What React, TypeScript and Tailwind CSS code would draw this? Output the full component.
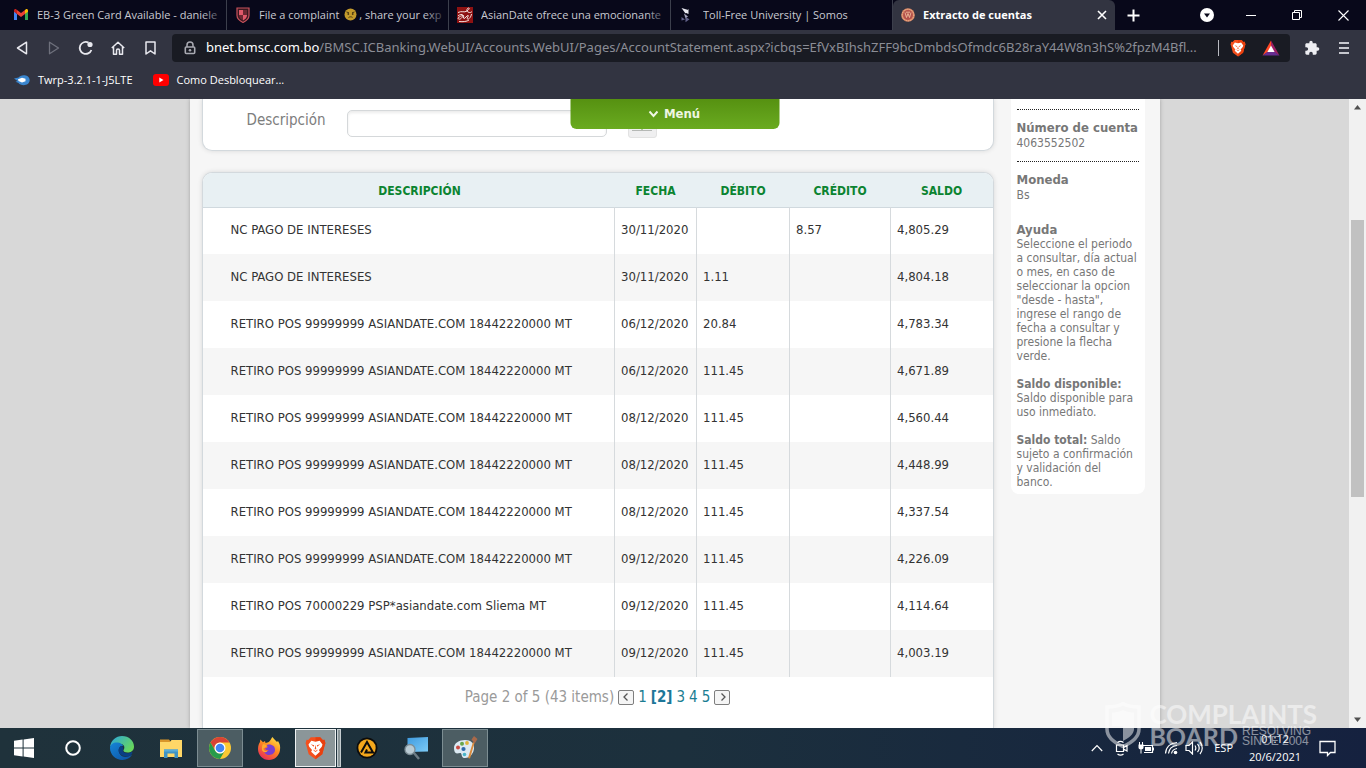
import type { ReactNode } from "react";

/* ---------- data ---------- */

type Movement = { text: string; date: string; debit: string; credit: string; balance: string };

const POS = "RETIRO POS 99999999 ASIANDATE.COM 18442220000 MT";

const movements: Movement[] = [
  { text: "NC PAGO DE INTERESES", date: "30/11/2020", debit: "", credit: "8.57", balance: "4,805.29" },
  { text: "NC PAGO DE INTERESES", date: "30/11/2020", debit: "1.11", credit: "", balance: "4,804.18" },
  { text: POS, date: "06/12/2020", debit: "20.84", credit: "", balance: "4,783.34" },
  { text: POS, date: "06/12/2020", debit: "111.45", credit: "", balance: "4,671.89" },
  { text: POS, date: "08/12/2020", debit: "111.45", credit: "", balance: "4,560.44" },
  { text: POS, date: "08/12/2020", debit: "111.45", credit: "", balance: "4,448.99" },
  { text: POS, date: "08/12/2020", debit: "111.45", credit: "", balance: "4,337.54" },
  { text: POS, date: "09/12/2020", debit: "111.45", credit: "", balance: "4,226.09" },
  { text: "RETIRO POS 70000229 PSP*asiandate.com Sliema MT", date: "09/12/2020", debit: "111.45", credit: "", balance: "4,114.64" },
  { text: POS, date: "09/12/2020", debit: "111.45", credit: "", balance: "4,003.19" },
];

/* ---------- icons ---------- */

const GmailIcon = () => (
  <svg width="16" height="16" viewBox="0 0 16 16" className="shrink-0">
    <path d="M1 3.600v9.400h3V7z" fill="#4285f4" />
    <path d="M15 3.600v9.400h-3V7z" fill="#34a853" />
    <path d="M12 7l3-2.200V3.600c0-1.400-1.500-1.900-2.400-1.200L12 3z" fill="#fbbc04" />
    <path d="M4 7L1 4.800V3.600C1 2.200 2.500 1.700 3.400 2.400L4 3z" fill="#c5221f" />
    <path d="M4 3l4 3.100L12 3v4l-4 3.100L4 7z" fill="#ea4335" />
  </svg>
);

const ShieldTabIcon = () => (
  <svg width="16" height="16" viewBox="0 0 16 16" className="shrink-0">
    <path d="M2 1h12v7.500c0 3.500-3 5.500-6 7-3-1.500-6-3.500-6-7z" fill="#3a1820" stroke="#c8525c" strokeWidth="1.200" />
    <path d="M4 3h4v5H4zM8 8h4v.5c0 2.300-2 3.800-4 5z" fill="#e0596a" />
    <path d="M8 3h4v5H8zM4 8h4v5.500c-2-1.200-4-2.700-4-5z" fill="#6b2832" />
  </svg>
);

const WryFace = () => (
  <svg width="13" height="13" viewBox="0 0 13 13" className="mx-[2px] inline-block align-[-2px]">
    <circle cx="6.500" cy="6.500" r="6" fill="#c39a2c" />
    <path d="M2.500 4l2.500.8M10.500 4L8 4.800M4.500 9.600c1-1 3-1 4-.2" stroke="#4c3a10" strokeWidth="1" fill="none" />
    <circle cx="4.300" cy="6" r=".9" fill="#4c3a10" />
    <circle cx="8.700" cy="6" r=".9" fill="#4c3a10" />
  </svg>
);

const AsianDateIcon = () => (
  <svg width="16" height="16" viewBox="0 0 16 16" className="shrink-0">
    <rect width="16" height="16" fill="#8e1212" />
    <path d="M1 5.500c4-2 6 .5 9-1.500 2-1.500 3-3 1.500-3S9 4 11 5s3 .5 4-.5M1 9c2-2 5-2 5-.5S3 13 1.500 12s2-3.500 5-3.500c1 0-1 3 .5 3s2.500-3 4-3-2 3-.5 3.500S14 10 14.500 7M2 14.500c4 .5 8 0 10-1.500" stroke="#f5e3e0" strokeWidth="1" fill="none" />
  </svg>
);

const SomosIcon = () => (
  <svg width="16" height="16" viewBox="0 0 16 16" className="shrink-0">
    <path d="M2.500 1l6 1.800-2 3.700zM9.500 2v5L6 5.500z" fill="#e8e8f0" />
    <path d="M5 6.500l4 3-2.500 2z" fill="#a4a4bd" />
    <path d="M6.500 10l4 2.200-4 3zM2.500 10l3.500 2.500-3.500 1z" fill="#62628a" />
  </svg>
);

const BankSeal = () => (
  <svg width="14" height="14" viewBox="0 0 14 14" className="shrink-0">
    <circle cx="7" cy="7" r="6.800" fill="#d98564" />
    <circle cx="7" cy="7" r="4.900" fill="#b5524c" />
    <circle cx="7" cy="7" r="5.800" fill="none" stroke="#f0c29c" strokeWidth=".8" strokeDasharray="1 1" />
    <path d="M4 4.500l1.500 5L7 5.500l1.500 4 1.500-5M5 4.200h4" stroke="#eebb9a" strokeWidth=".9" fill="none" />
  </svg>
);

const BraveIcon = ({ className }: { className: string }) => (
  <svg viewBox="0 0 20 23" className={className}>
    <path d="M5.500 1.200h9L17 3.800l1.600-.2L19.500 7l-.6 1.600-2.400 9L10 22.400l-6.500-4.800-2.400-9L.5 7l.9-3.400L3 3.800z" fill="#f4501e" />
    <path d="M10 1.200h4.500L17 3.800l1.600-.2L19.500 7l-.6 1.600-2.400 9L10 22.400z" fill="#e8400f" />
    <path d="M6 4.600l4 .8 4-.8 2.700 3.600-.7 2-2.700 3.300.9 1.600L10 18.900l-4.200-3.800.9-1.600L4 10.200l-.7-2z" fill="#fff" />
    <path d="M5.500 8l3.200.9-.3 1.400zM14.500 8l-3.200.9.300 1.400zM10 8.500l.8 4.300H9.200zM7.800 13l2.200 1.300 2.200-1.300-.6 1.200L10 15.400l-1.600-1.200z" fill="#f4501e" />
  </svg>
);

const ReloadIcon = () => (
  <svg width="16" height="16" viewBox="0 0 16 16">
    <path d="M13.400 10A6 6 0 1 1 10.500 2.600" stroke="currentColor" strokeWidth="1.800" fill="none" />
    <circle cx="12" cy="4.500" r="2.600" fill="currentColor" />
  </svg>
);

const EdgeIcon = () => (
  <svg width="26" height="26" viewBox="0 0 26 26">
    <defs>
      <linearGradient id="edgeTop" x1="0" y1="0" x2="1" y2="0.600">
        <stop offset="0" stopColor="#2aa6e0" />
        <stop offset="1" stopColor="#68d75c" />
      </linearGradient>
      <linearGradient id="edgeBase" x1="0" y1="0" x2="1" y2="1">
        <stop offset="0" stopColor="#1686d8" />
        <stop offset="1" stopColor="#0c4fa0" />
      </linearGradient>
    </defs>
    <path d="M1 12C2 5 7 1 13 1c7 0 12 5 12 10.500 0 4-3 6-6.500 6-3 0-4.500-1.200-4-2.500 2-2.500.5-6-3-6C6 9 2 10 1 12z" fill="url(#edgeTop)" />
    <path d="M1 13c0-4 4-6 8-5.500 3 .3 5 2.200 5.300 4-2-1.500-5 .8-4.600 4.500.5 4 4.300 7 9.300 5.600 1.800-.6 3.500-1.500 4-2C21.500 23 17.500 25 13.500 25 6.500 25 1 19.500 1 13z" fill="url(#edgeBase)" />
    <path d="M9.700 15.500c0-2.500 1.300-4.300 3.300-4.600 1.300 1.300 1.500 3 .8 4.300-.3 1.600 1.700 3 4.700 3 1.500 0 3.300-.6 4.700-1.500.3.700.2 1.600-.5 2.500-2 1.900-3.500 2.500-6 2.300-4-.4-7-2.800-7-6z" fill="#0a3f84" />
  </svg>
);

const FolderIcon = () => (
  <svg width="24" height="22" viewBox="0 0 24 22">
    <path d="M1 2.500h9l2 2.500H1z" fill="#d9962a" />
    <path d="M1 5l10 0 1.500-2H23v17H1z" fill="#ffd767" />
    <path d="M5 12.500h14V21h-3.500v-4.500h-7V21H5z" fill="#3e93c4" />
    <path d="M5 12.500h14v2H5z" fill="#58acd8" />
  </svg>
);

const ChromeIcon = () => (
  <svg width="24" height="24" viewBox="0 0 24 24">
    <circle cx="12" cy="12" r="11" fill="#fcc934" />
    <path d="M2.500 6.500A11 11 0 0 1 21.500 6.500H12a5.500 5.500 0 0 0-4.800 8.200z" fill="#d94335" />
    <path d="M2.500 6.500A11 11 0 0 0 12 23l4.800-8.200a5.500 5.500 0 0 1-9.600 0z" fill="#279b4b" />
    <circle cx="12" cy="12" r="5.500" fill="#fff" />
    <circle cx="12" cy="12" r="4.300" fill="#4285f4" />
  </svg>
);

const FirefoxIcon = () => (
  <svg width="24" height="25" viewBox="0 0 24 25">
    <defs>
      <linearGradient id="foxFire" x1="0.800" y1="0" x2="0.200" y2="1">
        <stop offset="0" stopColor="#ffe147" />
        <stop offset="0.450" stopColor="#ff8a1f" />
        <stop offset="1" stopColor="#e8245e" />
      </linearGradient>
    </defs>
    <path d="M15.500 1c1 2 3 3 4.500 5l1-1c2 3 2.500 5.500 2 9-.8 6-5.500 10-11 10C5.500 24 1 19 1 13c0-3.500 1-5.500 2-7l.3-2.500L6 6.200 8 5l.5 2c3-.5 4-1.500 5-3 .7-1 1-2 2-3z" fill="url(#foxFire)" />
    <path d="M12 8.500c4 0 6 2.300 6 5.300 0 3.200-2.600 5.200-5.700 5.200-3 0-5.300-2-5.300-4.500 1.500 1.200 3.300.8 4.700-.5-2.500.3-3.300-.5-3.700-1.500 1.500-.3 2.500-1 2.700-1.900-.8 0-1.200-.3-1.500-.8.700-.8 1.700-1.300 2.800-1.300z" fill="#7a3fd0" />
    <path d="M6 8c1 .2 3 .4 4 1.700-1 1-1.700 2-3.500 2.500 0 2 1.500 3.300 4 2.800-1.500 1.800-4 1.500-5.200-.2C4.500 12.500 5 10 6 8z" fill="#ffab2e" />
  </svg>
);

const AimpIcon = () => (
  <svg width="22" height="22" viewBox="0 0 22 22">
    <circle cx="11" cy="11" r="10.500" fill="#0c0c0c" />
    <circle cx="11" cy="11" r="8.700" fill="#f5a81c" />
    <path d="M5 15.500L11 5l6 10.500H9.500l1.500-3" stroke="#0c0c0c" strokeWidth="2" fill="none" />
  </svg>
);

const MonitorSearchIcon = () => (
  <svg width="26" height="25" viewBox="0 0 26 25">
    <defs>
      <linearGradient id="screenGlow" x1="0" y1="0" x2="1" y2="1">
        <stop offset="0" stopColor="#3f9be0" />
        <stop offset="1" stopColor="#7ccbf7" />
      </linearGradient>
    </defs>
    <path d="M4.500 2L25 1v14.500L4.500 16z" fill="url(#screenGlow)" />
    <path d="M11 17l5 6" stroke="#6b7b84" strokeWidth="2.500" />
    <circle cx="7" cy="13.500" r="5" fill="#b9cbd4" stroke="#7c8d96" strokeWidth="1.300" />
  </svg>
);

const PaintIcon = () => (
  <svg width="26" height="26" viewBox="0 0 26 26">
    <path d="M2 13c0-5 5-8 11-8 6 0 9 3 9 8s-4 10-9 10c-3 0-3-2-3.500-3.500C9 17 7 18.500 5 18.500c-2 0-3-2.500-3-5.500z" fill="#dce9f2" />
    <circle cx="6" cy="12.500" r="2" fill="#c94a42" />
    <circle cx="10" cy="8.700" r="2" fill="#67a54c" />
    <circle cx="15" cy="8" r="1.900" fill="#e0b23a" />
    <circle cx="11.500" cy="14" r="2.100" fill="#2f69ab" />
    <circle cx="12.500" cy="19.500" r="1.800" fill="#4bb5c8" />
    <path d="M21 7l1.500 1-4.500 15.500-2-.5z" fill="#d98b3d" />
    <path d="M19.500 4.500L22 1l3.500 3-2.800 4.500z" fill="#a9694a" />
  </svg>
);

/* ---------- browser chrome ---------- */

function Tab({ icon, children, fade = true }: { icon: ReactNode; children: ReactNode; fade?: boolean }) {
  return (
    <a href="#" role="tab" className="relative flex h-[30px] w-[222px] min-w-0 items-center gap-2 border-r border-[#3c3f4c] pl-2 text-[11px] text-[#c9cad1]">
      {icon}
      <span className="min-w-0 flex-1 overflow-hidden whitespace-nowrap">{children}</span>
      {fade && <span className="absolute right-0 h-full w-6 bg-linear-to-r from-transparent to-[#08081a]" />}
    </a>
  );
}

function TabStrip() {
  return (
    <div className="flex h-[30px] bg-[#08081a]">
      <div role="tablist" className="flex min-w-0 pl-[5px]">
        <Tab icon={<GmailIcon />}>EB-3 Green Card Available - daniele</Tab>
        <Tab icon={<ShieldTabIcon />}>File a complaint <WryFace />, share your exp</Tab>
        <Tab icon={<AsianDateIcon />}>AsianDate ofrece una emocionante</Tab>
        <Tab icon={<SomosIcon />} fade={false}>Toll-Free University | Somos</Tab>
        <div role="tab" aria-selected="true" className="flex h-[30px] w-[222px] min-w-0 items-center gap-2 rounded-t-md bg-[#323441] pr-2 pl-2 text-[11px] font-bold text-white">
          <BankSeal />
          <span className="min-w-0 flex-1 truncate">Extracto de cuentas</span>
          <button aria-label="Cerrar pestaña">
            <svg width="10" height="10" viewBox="0 0 10 10"><path d="M1 1l8 8M9 1L1 9" stroke="#fff" strokeWidth="1.600" /></svg>
          </button>
        </div>
      </div>
      <button aria-label="Nueva pestaña" className="ml-[6px] flex w-6 items-center justify-center">
        <svg width="13" height="13" viewBox="0 0 13 13"><path d="M6.500 0.500v12M0.500 6.500h12" stroke="#fff" strokeWidth="2" /></svg>
      </button>
      <div className="ml-auto flex items-center">
        <button aria-label="Buscar pestañas" className="flex w-[42px] justify-center">
          <svg width="14" height="14" viewBox="0 0 14 14"><circle cx="7" cy="7" r="7" fill="#fff" /><path d="M4 5.500h6L7 9.500z" fill="#08081a" /></svg>
        </button>
        <button aria-label="Minimizar" className="flex w-[46px] justify-center">
          <svg width="10" height="10" viewBox="0 0 10 10"><path d="M0 5.500h10" stroke="#fff" /></svg>
        </button>
        <button aria-label="Restaurar" className="flex w-[46px] justify-center">
          <svg width="10" height="10" viewBox="0 0 10 10"><path d="M0.500 2.500h7v7h-7zM2.500 2.500v-2h7v7h-2" stroke="#fff" fill="none" /></svg>
        </button>
        <button aria-label="Cerrar" className="flex w-[46px] justify-center">
          <svg width="11" height="11" viewBox="0 0 11 11"><path d="M0.500 0.500l10 10M10.500 0.500l-10 10" stroke="#fff" strokeWidth="1.100" /></svg>
        </button>
      </div>
    </div>
  );
}

function Toolbar() {
  return (
    <div className="flex h-9 items-center bg-[#323441] text-[#e8e8ee]">
      <div className="flex w-[172px] shrink-0 items-center pl-[6px]">
        <button aria-label="Atrás" className="flex w-8 justify-center">
          <svg width="12" height="14" viewBox="0 0 12 14"><path d="M10.500 1.200v11.600L1.500 7z" stroke="currentColor" strokeWidth="1.500" fill="none" strokeLinejoin="round" /></svg>
        </button>
        <button aria-label="Adelante" className="flex w-8 justify-center text-[#6e707c]">
          <svg width="12" height="14" viewBox="0 0 12 14"><path d="M1.500 1.200v11.600l9-5.800z" stroke="currentColor" strokeWidth="1.300" fill="none" strokeLinejoin="round" /></svg>
        </button>
        <button aria-label="Recargar" className="flex w-8 justify-center"><ReloadIcon /></button>
        <button aria-label="Inicio" className="flex w-8 justify-center">
          <svg width="14" height="14" viewBox="0 0 14 14"><path d="M0.800 7L7 1.200 13.200 7M2.500 6v7.200h3V9.500c0-2 3-2 3 0v3.700h3V6" stroke="currentColor" strokeWidth="1.500" fill="none" strokeLinejoin="round" /></svg>
        </button>
        <button aria-label="Marcador" className="flex w-8 justify-center">
          <svg width="11" height="14" viewBox="0 0 11 14"><path d="M1 1h9v12L5.500 9.800 1 13z" stroke="currentColor" strokeWidth="1.500" fill="none" strokeLinejoin="round" /></svg>
        </button>
      </div>
      <div className="flex h-7 min-w-0 flex-1 items-center rounded bg-[#191b23] pl-3">
        <svg width="12" height="14" viewBox="0 0 12 14" className="shrink-0">
          <path d="M3 6V4a3 3 0 0 1 6 0v2" stroke="#a9aab2" strokeWidth="1.500" fill="none" />
          <rect x="1.300" y="6" width="9.400" height="6.500" rx="1" fill="none" stroke="#a9aab2" strokeWidth="1.600" />
          <circle cx="6" cy="9.200" r="1.300" fill="#a9aab2" />
        </svg>
        <span className="ml-[10px] min-w-0 flex-1 overflow-hidden font-['Noto_Sans',sans-serif] text-[13px] whitespace-nowrap text-[#8b8d96]">
          <span className="text-white">bnet.bmsc.com.bo</span>/BMSC.ICBanking.WebUI/Accounts.WebUI/Pages/AccountStatement.aspx?icbqs=EfVxBIhshZFF9bcDmbdsOfmdc6B28raY44W8n3hS%2fpzM4Bfl...
        </span>
        <span className="h-4 w-px bg-[#b9bac1]" />
        <button aria-label="Brave Shields" className="ml-[11px]"><BraveIcon className="h-[18px] w-4" /></button>
        <button aria-label="Brave Rewards" className="mr-[10px] ml-4">
          <svg width="18" height="16" viewBox="0 0 18 16">
            <path d="M9 0.500L0.500 15.500 9 10z" fill="#ff4724" />
            <path d="M9 0.500l8.500 15L9 10z" fill="#9e1f63" />
            <path d="M0.500 15.500h17L12 11.500H6z" fill="#662d91" />
            <path d="M9 5.500l3.600 6.500H5.400z" fill="#fff" />
          </svg>
        </button>
      </div>
      <button aria-label="Extensiones" className="ml-[14px]">
        <svg width="16" height="16" viewBox="0 0 24 24" className="text-[#eeeef2]">
          <path d="M20.500 11H19V7c0-1.100-.9-2-2-2h-4V3.500a2.500 2.500 0 0 0-5 0V5H4c-1.100 0-2 .9-2 2v3.800h1.500a2.700 2.700 0 0 1 0 5.400H2V20c0 1.100.9 2 2 2h3.800v-1.500a2.700 2.700 0 0 1 5.400 0V22H17c1.100 0 2-.9 2-2v-4h1.500a2.500 2.500 0 0 0 0-5z" fill="currentColor" />
        </svg>
      </button>
      <button aria-label="Menú de Brave" className="mr-[17px] ml-[19px]">
        <svg width="10" height="12" viewBox="0 0 10 12"><path d="M0 1h10M0 6h10M0 11h10" stroke="#c6c7ce" strokeWidth="1.800" /></svg>
      </button>
    </div>
  );
}

function Bookmarks() {
  return (
    <nav className="flex h-[33px] items-start bg-[#323441] px-[14px] pt-[6px] text-[11px] text-white">
      <a href="#" className="flex items-center gap-2">
        <svg width="16" height="16" viewBox="0 0 16 16">
          <path d="M0 6.500l4.500-1C6 2.500 15 1.500 15.700 8 15.500 14.500 6.500 14 4.500 11L1.500 9.800l2-.8z" fill="#3a86cf" />
          <path d="M4 7.200l4-1.400 3.500 1v2.400L8 10.500 4.500 9z" fill="#fff" />
        </svg>
        Twrp-3.2.1-1-J5LTE
      </a>
      <a href="#" className="ml-5 flex items-center gap-2">
        <svg width="16" height="16" viewBox="0 0 16 16"><rect y="2" width="16" height="12" rx="3" fill="#f00" /><path d="M6.300 5.400L10.500 8l-4.200 2.600z" fill="#fff" /></svg>
        Como Desbloquear...
      </a>
    </nav>
  );
}

/* ---------- page ---------- */

function SearchCard() {
  return (
    <form className="flex h-[52px] items-start rounded-b-[10px] border border-t-0 border-[#d3d9dd] bg-white pl-[44px] shadow-[0_0_5px_rgba(0,0,0,0.120)]">
      <label htmlFor="descripcion" className="mt-[10px] w-[100px] text-[15px] leading-[22px] text-[#7d7d7d]">Descripción</label>
      <input id="descripcion" className="mt-[11px] h-[27px] w-[260px] rounded-[5px] border border-[#d5d8da] bg-white px-2 text-[13px] shadow-[inset_0_2px_3px_rgba(0,0,0,0.080)]" />
      <button type="button" aria-label="Buscar" className="mt-[11px] ml-[21px] flex h-[28px] w-[29px] items-end justify-center rounded-[3px] border border-[#e2e2e2] bg-[#efeff0] pb-1">
        <svg width="20" height="12" viewBox="0 0 20 12"><path d="M7 2h6l-3 7.500z" fill="#5c9c28" /><path d="M0 9.500h20" stroke="#b5b8b5" /></svg>
      </button>
    </form>
  );
}

const cell = "border-l border-[#d6dadd] px-[6px] pt-0 pb-[2px]";

function StatementTable() {
  return (
    <section className="mt-[21px] flex-1 overflow-hidden rounded-t-[10px] border border-b-0 border-[#d3d9dd] bg-white shadow-[0_0_5px_rgba(0,0,0,0.120)]">
      <table className="w-full table-fixed border-collapse text-left text-[13px] text-[#333]">
        <colgroup>
          <col />
          <col className="w-[82px]" />
          <col className="w-[93px]" />
          <col className="w-[101px]" />
          <col className="w-[102px]" />
        </colgroup>
        <thead>
          <tr className="h-[34px] border-b border-[#d0d9de] bg-[#e8f0f3] text-center text-[12px] text-[#0b8430]">
            <th className="pt-[2px] pr-[6px] pl-[28px]">DESCRIPCIÓN</th>
            <th className="px-[6px] pt-[2px]">FECHA</th>
            <th className="px-[6px] pt-[2px]">DÉBITO</th>
            <th className="px-[6px] pt-[2px]">CRÉDITO</th>
            <th className="px-[6px] pt-[2px]">SALDO</th>
          </tr>
        </thead>
        <tbody>
          {movements.map((m) => (
            <tr key={m.balance} className="h-[47px] even:bg-[#f6f6f6]">
              <td className="pt-0 pr-[6px] pb-[2px] pl-[28px]">{m.text}</td>
              <td className={cell}>{m.date}</td>
              <td className={cell}>{m.debit}</td>
              <td className={cell}>{m.credit}</td>
              <td className={cell}>{m.balance}</td>
            </tr>
          ))}
        </tbody>
      </table>
      <nav aria-label="Paginación" className="flex items-center justify-center pt-[9px] pl-1 text-[15px] leading-[22px] text-[#9a9a9a]">
        <span>Page 2 of 5 (43 items)</span>
        <PagerArrow label="Anterior" d="M6.500 2.500L3 6l3.500 3.500" />
        <span className="flex gap-1 text-[#1b7d92]">
          <a href="#">1</a>
          <b className="text-[#1d7799]">[2]</b>
          <a href="#">3</a>
          <a href="#">4</a>
          <a href="#">5</a>
        </span>
        <PagerArrow label="Siguiente" d="M4.500 2.500L8 6 4.500 9.500" />
      </nav>
    </section>
  );
}

function PagerArrow({ label, d }: { label: string; d: string }) {
  return (
    <button aria-label={label} className="mx-1 flex h-[15px] w-4 items-center justify-center rounded-[2px] border border-[#7e7e7e] bg-[#f5f5f5]">
      <svg width="11" height="12" viewBox="0 0 11 12"><path d={d} stroke="#555" strokeWidth="1.300" fill="none" /></svg>
    </button>
  );
}

function Sidebar() {
  return (
    <aside className="h-[395px] w-[134px] shrink-0 rounded-b-[8px] bg-white px-[6px] pt-[10px] text-[12px] leading-[14px] text-[#777]">
      <div className="border-t border-dotted border-[#222] pt-[10px] pb-[10px]">
        <h3 className="text-[13px] leading-4 font-bold whitespace-nowrap">Número de cuenta</h3>
        <p className="leading-[15px]">4063552502</p>
      </div>
      <div className="border-t border-dotted border-[#222] pt-[10px]">
        <h3 className="text-[13px] leading-4 font-bold">Moneda</h3>
        <p className="leading-[15px]">Bs</p>
      </div>
      <div className="mt-[20px]">
        <h3 className="text-[13px] font-bold">Ayuda</h3>
        <p>Seleccione el periodo a consultar, día actual o mes, en caso de seleccionar la opcion "desde - hasta", ingrese el rango de fecha a consultar y presione la flecha verde.</p>
        <p className="mt-[14px]"><b>Saldo disponible:</b> Saldo disponible para uso inmediato.</p>
        <p className="mt-[14px]"><b>Saldo total:</b> Saldo sujeto a confirmación y validación del banco.</p>
      </div>
    </aside>
  );
}

function ScrollTrack() {
  return (
    <div className="flex w-[17px] shrink-0 flex-col items-center bg-[#f1f1f1] py-[6px]">
      <svg width="7" height="5" viewBox="0 0 7 5"><path d="M3.500 0L7 4.500H0z" fill="#505050" /></svg>
      <div className="grow" />
      <div className="h-[277px] w-[13px] bg-[#c1c1c1]" />
      <div className="grow-[2]" />
      <svg width="7" height="5" viewBox="0 0 7 5"><path d="M3.500 5L7 0.500H0z" fill="#505050" /></svg>
    </div>
  );
}

/* ---------- taskbar ---------- */

function TaskButton({ label, active, children }: { label: string; active?: boolean; children: ReactNode }) {
  return (
    <button aria-label={label} className="flex h-10 w-[49px] items-center justify-center">
      <span className={active ? "flex h-[38px] w-[46px] items-center justify-center border border-[#7c8d92] bg-[#4c5d63]" : ""}>
        {children}
      </span>
    </button>
  );
}

function Taskbar() {
  return (
    <footer className="flex h-10 shrink-0 items-center bg-linear-to-r from-[#1f323b] via-[#1c303d] to-[#15213f] text-white">
      <button aria-label="Inicio" className="flex w-12 justify-center">
        <svg width="20" height="20" viewBox="0 0 20 20"><path d="M0 2.800L8.600 1.600v7.900H0zM9.600 1.400L20 0v9.500H9.600zM0 10.500h8.600v7.900L0 17.200zM9.600 10.500H20V20L9.600 18.600z" fill="#fff" /></svg>
      </button>
      <button aria-label="Cortana" className="flex w-[49px] justify-center">
        <svg width="16" height="16" viewBox="0 0 16 16"><circle cx="8" cy="8" r="6.800" fill="none" stroke="#fff" strokeWidth="2" /></svg>
      </button>
      <TaskButton label="Edge"><EdgeIcon /></TaskButton>
      <TaskButton label="Explorador de archivos"><FolderIcon /></TaskButton>
      <TaskButton label="Chrome" active><ChromeIcon /></TaskButton>
      <TaskButton label="Firefox"><FirefoxIcon /></TaskButton>
      <button aria-label="Brave" className="flex h-[38px] w-[49px] items-stretch justify-center gap-px">
        <span className="flex w-[41px] items-center justify-center border border-[#eef1f2] bg-[#8b9699]"><BraveIcon className="h-6 w-[21px]" /></span>
        <span className="w-1 border border-[#c5cdd0] bg-[#8b9699]" />
      </button>
      <TaskButton label="AIMP"><AimpIcon /></TaskButton>
      <TaskButton label="Escritorio remoto"><MonitorSearchIcon /></TaskButton>
      <TaskButton label="Paint" active><PaintIcon /></TaskButton>
      <div className="ml-auto flex items-center text-[11px]">
        <svg width="12" height="8" viewBox="0 0 12 8"><path d="M0.800 7L6 1.500 11.200 7" stroke="#fff" strokeWidth="1.200" fill="none" /></svg>
        <svg width="13" height="16" viewBox="0 0 13 16" className="ml-[12px]">
          <path d="M1.500 5h7v6.500h-7zM8.500 7.500L12 5.500v5.500l-3.500-2M2.500 2.500c2-1.500 4-1.500 6 0M2.500 14c2 1.500 4 1.500 6 0" stroke="#fff" strokeWidth="1.200" fill="none" />
        </svg>
        <svg width="16" height="14" viewBox="0 0 16 14" className="ml-[10px]">
          <path d="M5 4.500h9.500v7H6" stroke="#fff" strokeWidth="1.200" fill="none" />
          <path d="M7 6h6v4H7zM15 6.500h1v3h-1zM0.500 3.500h5v3c0 1-1 2-2.500 2s-2.500-1-2.500-2zM1 1h1v2.500H1zM4 1h1v2.500H4zM2.500 8.500h1v4h-1z" fill="#fff" />
        </svg>
        <svg width="15" height="14" viewBox="0 0 15 14" className="ml-[10px]">
          <path d="M1.500 12.500C2 6 6.500 2 13 1.500M4.500 12.500C5 8 8 5 13 4.500M7.500 12.500c.5-2.500 2.500-4.500 5.500-5" stroke="#fff" strokeWidth="1.200" fill="none" />
          <circle cx="11.500" cy="11.500" r="1.800" fill="#fff" />
        </svg>
        <svg width="18" height="14" viewBox="0 0 18 14" className="ml-[6px]">
          <path d="M1 4.500h3L7.500 1v12L4 9.500H1zM10 4.500c1 1.500 1 3.500 0 5M12.500 2.800c2 2.500 2 6 0 8.400M15 1c3 3.500 3 8.500 0 12" stroke="#fff" strokeWidth="1.200" fill="none" />
        </svg>
        <span className="ml-[11px]">ESP</span>
        <time className="ml-[14px] flex w-[56px] flex-col items-center leading-[18px]">
          <span>01:12</span>
          <span>20/6/2021</span>
        </time>
        <button aria-label="Notificaciones" className="mr-[30px] ml-[16px]">
          <svg width="17" height="17" viewBox="0 0 17 17"><path d="M1 1.500h15v11h-4.500L8.500 15.500v-3H1z" stroke="#fff" strokeWidth="1.300" fill="none" /></svg>
        </button>
      </div>
    </footer>
  );
}

function Watermark() {
  return (
    <div className="pointer-events-none absolute right-[49px] bottom-5 flex items-center gap-2 font-['Lato',sans-serif] font-bold text-white opacity-50">
      <svg width="36" height="46" viewBox="0 0 36 46">
        <path d="M2 5c6 0 12-1 16-3.500C22 4 28 5 34 5v22c0 9-8 14-16 17.500C10 41 2 36 2 27z" fill="none" stroke="#fff" strokeWidth="3.500" />
        <path d="M18 8c4 2 7 2.500 11 2.500V27c0 5-5 9-11 12zM7 10.500C11 10.500 14 10 18 8v16H7z" fill="#fff" />
      </svg>
      <div>
        <div className="text-[26px] leading-[22px]">COMPLAINTS</div>
        <div className="flex items-center gap-1">
          <span className="text-[25px] leading-[22px]">BOARD</span>
          <span className="font-['Liberation_Sans',sans-serif] text-[12px] leading-[10px] font-normal">RESOLVING<br />SINCE 2004</span>
        </div>
      </div>
    </div>
  );
}

export default function App() {
  return (
    <div className="relative flex h-screen flex-col overflow-hidden bg-[#d8d8d8] font-['Open_Sans','Noto_Sans',sans-serif]">
      <header className="shrink-0">
        <TabStrip />
        <Toolbar />
        <Bookmarks />
      </header>
      <div className="flex min-h-0 flex-1 font-['DejaVu_Sans_Condensed','DejaVu_Sans',sans-serif]">
        <div className="relative min-w-0 flex-1 overflow-hidden">
          <main className="mx-auto flex h-full max-w-[970px] items-start bg-[#f6f6f6] pr-[15px] pl-[12px] shadow-[0_0_4px_rgba(0,0,0,0.250)]">
            <div className="mr-[17px] flex h-full min-w-0 flex-1 flex-col">
              <SearchCard />
              <StatementTable />
            </div>
            <Sidebar />
          </main>
          <button className="absolute top-0 left-1/2 flex h-[30px] w-[209px] -translate-x-1/2 items-center justify-center gap-[5px] rounded-b-[6px] bg-linear-to-b from-[#569111] to-[#6aab20] text-[13px] font-bold text-[#eef6e2]">
            <svg width="10" height="8" viewBox="0 0 10 8"><path d="M1 1.500l4 4.500 4-4.500" stroke="currentColor" strokeWidth="2" fill="none" /></svg>
            Menú
          </button>
        </div>
        <ScrollTrack />
      </div>
      <Taskbar />
      <Watermark />
    </div>
  );
}
